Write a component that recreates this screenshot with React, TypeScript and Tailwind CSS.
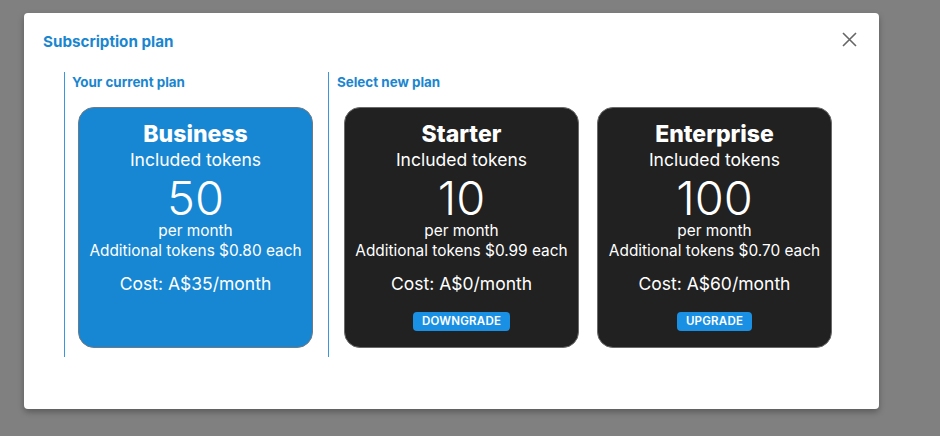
const plans = [
  { name: "Starter", tokens: 10, extra: "$0.99", cost: "A$0", action: "Downgrade" },
  { name: "Enterprise", tokens: 100, extra: "$0.70", cost: "A$60", action: "Upgrade" },
]

function PlanCard({
  name,
  tokens,
  extra,
  cost,
  action,
  current,
}: {
  name: string
  tokens: number
  extra: string
  cost: string
  action?: string
  current?: boolean
}) {
  return (
    <div
      className={`w-[235px] h-[241px] rounded-2xl border flex flex-col items-center pt-3 text-white ${
        current ? "bg-[#1787d3] border-[#6f7a85]" : "bg-[#212121] border-[#6a6a6a]"
      }`}
    >
      <h4 className="text-[23px] leading-7 font-extrabold">{name}</h4>
      <p className="text-[17.5px] leading-6">Included tokens</p>
      <p className="mt-[3px] text-[47px] leading-[46px] font-light">{tokens}</p>
      <p className="text-[15.4px] leading-5">per month</p>
      <p className="text-[15.4px] leading-5">Additional tokens {extra} each</p>
      <p className="mt-[11px] text-[17.5px] leading-6">Cost: {cost}/month</p>
      {action && (
        <button className="mt-4 h-[19px] px-[9px] rounded-[4px] bg-[#1a90e4] text-[11.5px] font-semibold uppercase tracking-[0.02em] leading-[19px] text-white">
          {action}
        </button>
      )}
    </div>
  )
}

export default function App() {
  return (
    <div
      className="w-[940px] h-[436px] bg-[#808080] pt-[13px] pl-[24px]"
      style={{ fontFamily: "Inter, 'Noto Sans', sans-serif" }}
    >
      <div className="w-[855px] h-[396px] bg-white rounded-[4px] shadow-[0_3px_6px_rgba(0,0,0,0.3)] px-[19px] pt-[19px]">
        <div className="flex items-start justify-between">
          <h2 className="text-[15.2px] leading-5 font-bold text-[#1a86d0]">Subscription plan</h2>
          <button className="mr-[3px] text-[#666666]" aria-label="Close">
            <svg width="15" height="15" viewBox="0 0 15 15" fill="none" stroke="currentColor" strokeWidth="1.6">
              <path d="M1 1l13 13M14 1L1 14" />
            </svg>
          </button>
        </div>

        <div className="flex mt-[20px] ml-[21px]">
          <div className="w-[264px] border-l border-[#3a97dc] pl-[7px] pb-[9px]">
            <h3 className="text-[13.4px] leading-4 font-bold text-[#1a86d0] pt-[2px]">Your current plan</h3>
            <div className="mt-[17px] ml-[6px]">
              <PlanCard name="Business" tokens={50} extra="$0.80" cost="A$35" current />
            </div>
          </div>
          <div className="border-l border-[#3a97dc] pl-[8px] pb-[9px]">
            <h3 className="text-[13.4px] leading-4 font-bold text-[#1a86d0] pt-[2px]">Select new plan</h3>
            <div className="mt-[17px] ml-[7px] flex gap-[18px]">
              {plans.map((p) => (
                <PlanCard key={p.name} {...p} />
              ))}
            </div>
          </div>
        </div>
      </div>
    </div>
  )
}
